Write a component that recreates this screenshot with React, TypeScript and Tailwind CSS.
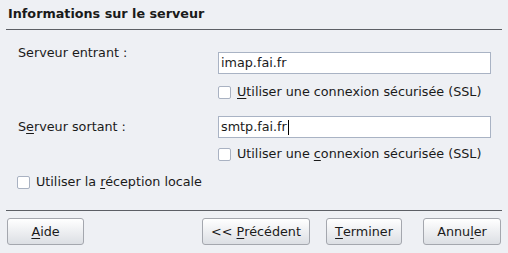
import React from "react"

function CheckBox({ children }: { children: React.ReactNode }) {
  return (
    <div className="flex h-4 items-center leading-4">
      <span className="mr-[6px] h-[13px] w-[13px] rounded-[2px] border border-[#a9b2c2] bg-white" />
      <span>{children}</span>
    </div>
  )
}

function Field({ value, caret }: { value: string; caret?: boolean }) {
  return (
    <div className="flex h-[22px] w-[273px] items-center border border-[#a9b3c4] bg-white pl-[2px] leading-4">
      <span>{value}</span>
      {caret && <span className="ml-px h-[15px] w-px bg-black" />}
    </div>
  )
}

function Button({ width, children }: { width: string; children: React.ReactNode }) {
  return (
    <button
      className={`flex h-[27px] ${width} items-center justify-center rounded-[3px] border border-[#a4a7ae] bg-gradient-to-b from-white to-[#dcdfe4] leading-4 text-[#1a1a1a]`}
    >
      {children}
    </button>
  )
}

export default function App() {
  return (
    <div
      className="h-[253px] w-[508px] overflow-hidden bg-[#eef0f4] text-[12.75px] text-[#1a1a1a]"
      style={{ fontFamily: '"DejaVu Sans", Verdana, sans-serif' }}
    >
      {/* Title */}
      <div className="pl-2 pt-[6px] font-bold leading-4">Informations sur le serveur</div>
      <div className="mx-[6px] mt-[7px] h-px bg-[#5c5f65]" />

      {/* Incoming server */}
      <div className="mt-[15px] flex pl-[18px]">
        <div className="w-[200px] leading-4">Serveur entrant :</div>
        <div className="mt-[7px]">
          <Field value="imap.fai.fr" />
        </div>
      </div>
      <div className="mt-[10px] pl-[218px]">
        <CheckBox>
          <u className="underline-offset-2">U</u>tiliser une connexion sécurisée (SSL)
        </CheckBox>
      </div>

      {/* Outgoing server */}
      <div className="mt-[16px] flex items-center pl-[18px]">
        <div className="w-[200px] leading-4">
          S<u className="underline-offset-2">e</u>rveur sortant :
        </div>
        <Field value="smtp.fai.fr" caret />
      </div>
      <div className="mt-[8px] pl-[218px]">
        <CheckBox>
          Utiliser une <u className="underline-offset-2">c</u>onnexion sécurisée (SSL)
        </CheckBox>
      </div>

      <div className="mt-[12px] pl-[17px]">
        <CheckBox>
          Utiliser la <u className="underline-offset-2">r</u>éception locale
        </CheckBox>
      </div>

      <div className="mx-[6px] mt-[20px] h-px bg-[#5c5f65]" />

      {/* Buttons */}
      <div className="mt-[7px] flex px-[7px]">
        <Button width="w-[77px]">
          <u className="underline-offset-2">A</u>ide
        </Button>
        <div className="flex-1" />
        <Button width="w-[108px]">
          <span className="whitespace-pre">&lt;&lt; </span>
          <u className="underline-offset-2">P</u>récédent
        </Button>
        <div className="ml-[16px]">
          <Button width="w-[76px]">
            <u className="underline-offset-2">T</u>erminer
          </Button>
        </div>
        <div className="ml-[21px]">
          <Button width="w-[78px]">
            Annu<u className="underline-offset-2">l</u>er
          </Button>
        </div>
      </div>
    </div>
  )
}
